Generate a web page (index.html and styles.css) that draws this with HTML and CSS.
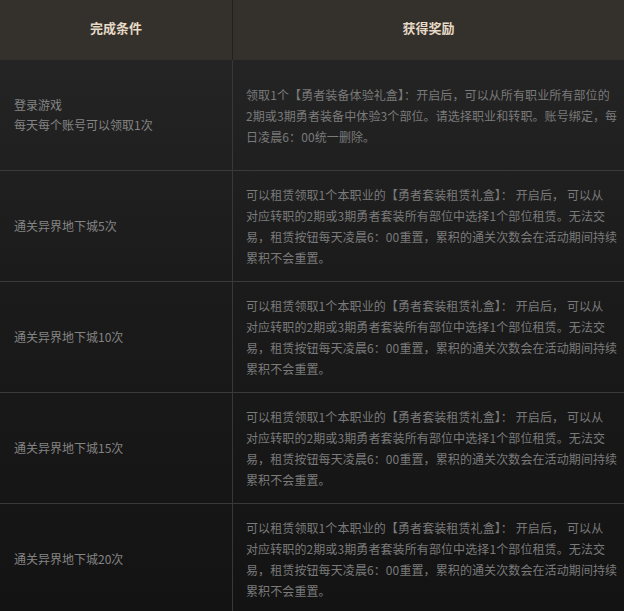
FILE: index.html
```html
<!DOCTYPE html>
<html lang="zh-CN">
<head>
<meta charset="utf-8">
<title>活动奖励</title>
<link rel="stylesheet" href="styles.css">
</head>
<body>
<div class="table">
  <div class="head">
    <div class="hcell hleft">完成条件</div>
    <div class="hcell">获得奖励</div>
  </div>
  <div class="body">
    <div class="row">
      <div class="cond">登录游戏<br>每天每个账号可以领取1次</div>
      <div class="reward">领取1个【勇者装备体验礼盒】：开启后，可以从所有职业所有部位的<br>2期或3期勇者装备中体验3个部位。请选择职业和转职。账号绑定，每<br>日凌晨6：00统一删除。</div>
    </div>
    <div class="row">
      <div class="cond">通关异界地下城5次</div>
      <div class="reward">可以租赁领取1个本职业的【勇者套装租赁礼盒】： 开启后， 可以从<br>对应转职的2期或3期勇者套装所有部位中选择1个部位租赁。无法交<br>易，租赁按钮每天凌晨6：00重置，累积的通关次数会在活动期间持续<br>累积不会重置。</div>
    </div>
    <div class="row">
      <div class="cond">通关异界地下城10次</div>
      <div class="reward">可以租赁领取1个本职业的【勇者套装租赁礼盒】： 开启后， 可以从<br>对应转职的2期或3期勇者套装所有部位中选择1个部位租赁。无法交<br>易，租赁按钮每天凌晨6：00重置，累积的通关次数会在活动期间持续<br>累积不会重置。</div>
    </div>
    <div class="row">
      <div class="cond">通关异界地下城15次</div>
      <div class="reward">可以租赁领取1个本职业的【勇者套装租赁礼盒】： 开启后， 可以从<br>对应转职的2期或3期勇者套装所有部位中选择1个部位租赁。无法交<br>易，租赁按钮每天凌晨6：00重置，累积的通关次数会在活动期间持续<br>累积不会重置。</div>
    </div>
    <div class="row">
      <div class="cond">通关异界地下城20次</div>
      <div class="reward">可以租赁领取1个本职业的【勇者套装租赁礼盒】： 开启后， 可以从<br>对应转职的2期或3期勇者套装所有部位中选择1个部位租赁。无法交<br>易，租赁按钮每天凌晨6：00重置，累积的通关次数会在活动期间持续<br>累积不会重置。</div>
    </div>
  </div>
</div>
</body>
</html>
```
FILE: styles.css
```css
html, body {
  margin: 0;
  padding: 0;
  background: #131313;
}
body {
  font-family: "Noto Sans CJK SC", "DejaVu Sans", sans-serif;
  font-size: 12px;
  width: 624px;
  height: 611px;
  overflow: hidden;
}
.table {
  width: 624px;
}
.head {
  display: grid;
  grid-template-columns: 233px 1fr;
  height: 60px;
  background: #34312d;
}
.hcell {
  display: flex;
  align-items: center;
  justify-content: center;
  padding-bottom: 5px;
  color: #e6d9c6;
  font-size: 13px;
  font-weight: bold;
}
.hleft {
  border-right: 1px solid #22201d;
}
.body {
  background: linear-gradient(to bottom, #242424 0%, #1b1b1b 40%, #131313 100%);
}
.row {
  display: grid;
  grid-template-columns: 233px 1fr;
  height: 110px;
  border-bottom: 1px solid #3a3a3a;
}
.cond {
  display: flex;
  flex-direction: column;
  justify-content: center;
  padding-left: 14px;
  border-right: 1px solid #383838;
  color: #848484;
  line-height: 20px;
}
.reward {
  display: flex;
  flex-direction: column;
  justify-content: center;
  padding-left: 13px;
  color: #7a7a7a;
  line-height: 21px;
  letter-spacing: 0.1px;
  white-space: nowrap;
}
```
